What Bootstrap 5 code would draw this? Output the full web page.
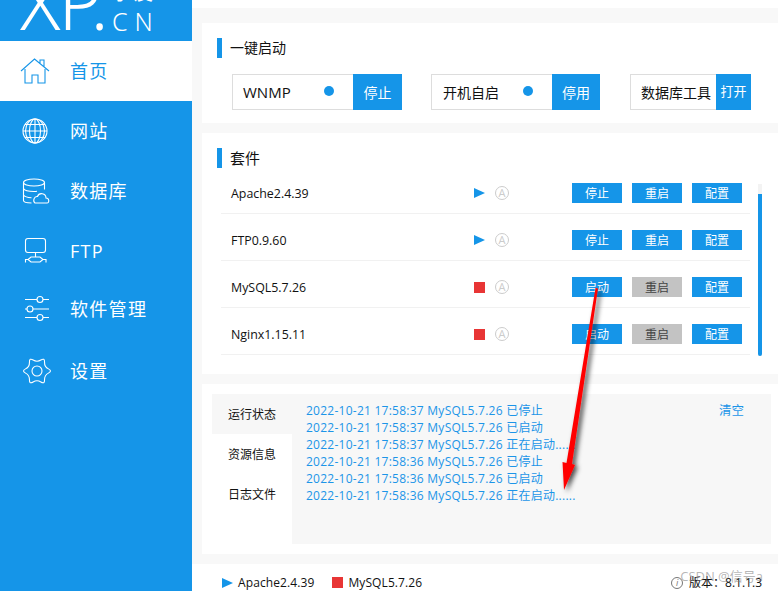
<!DOCTYPE html>
<html lang="zh-CN">
<head>
  <meta charset="UTF-8" />
  <meta name="viewport" content="width=device-width, initial-scale=1.0"/>
  <title>小皮面板</title>
  <link href="https://cdn.jsdelivr.net/npm/bootstrap@5.3.0/dist/css/bootstrap.min.css" rel="stylesheet">
  <style>
    body {
      font-family: "Open Sans", "Noto Sans CJK SC", sans-serif;
      font-size: 13px;
      color: #111;
      overflow: hidden;
    }
    .app-shell { width: 778px; height: 591px; overflow: hidden; position: relative; }
    .side-bar { width: 192px; background: #1595e8; flex-shrink: 0; }
    .logo-box { height: 41px; overflow: hidden; color: #fff; padding-left: 20px; }
    .logo-xp { font-family: "Noto Sans", sans-serif; font-weight: 300; font-size: 74px; line-height: 1; width: 92px; flex-shrink: 0; margin-top: -35px; letter-spacing: -2px; }
    .logo-cn { margin-top: -18px; line-height: 1; }
    .logo-cn .cn-top { font-size: 19px; letter-spacing: 3px; line-height: 22px; display: block; margin-bottom: 5px; }
    .logo-cn .cn-bottom { font-family: "Noto Sans", sans-serif; font-weight: 300; font-size: 25px; letter-spacing: 7px; line-height: 25px; display: block; }
    .side-link { height: 60px; padding: 0 0 0 20px; color: #fff; font-size: 18px; letter-spacing: 1.3px; }
    .side-link:hover, .side-link:focus { color: #fff; }
    .side-link.active, .side-link.active:hover { background: #fff; color: #1595e8; }
    .side-link svg { width: 30px; height: 30px; margin-right: 20px; overflow: visible; flex-shrink: 0; fill: none; stroke: currentColor; stroke-width: 1.1; }
    .side-link.lift-up { padding-bottom: 4px; }
    .main-area { background: #f8f8f8; min-width: 0; }
    .top-strip { height: 8px; background: #fff; margin-bottom: 15px; margin-left: 0; }
    .white-panel { background: #fff; margin: 0 0 10px 10px; }
    .panel-title { margin-left: 15px; padding-left: 8px; border-left: 5px solid #1595e8; height: 20px; line-height: 20px; font-size: 14px; }
    .quick-box { height: 36px; border: 1px solid #ddd; border-right: 0; padding-left: 10px; font-size: 14px; }
    .quick-box .box-text { padding-top: 1px; }
    .status-dot { width: 10px; height: 10px; border-radius: 50%; background: #1595e8; margin-bottom: 3px; }
    .flat-btn { background: #1595e8; color: #fff; border: 0; border-radius: 0; padding: 0; font-size: 13px; }
    .flat-btn:hover { background: #1595e8; color: #fff; }
    .quick-btn { height: 36px; font-size: 14px; }
    .suite-list { margin-left: 19px; width: 529px; margin-top: -1px; }
    .suite-row { height: 47px; padding: 16px 8px 10px 10px; border-bottom: 1px solid #f1f1f1; }
    .suite-name { width: 243px; line-height: 22px; font-size: 12.4px; }
    .play-mark { width: 0; height: 0; border-left: 11px solid #1595e8; border-top: 5.5px solid transparent; border-bottom: 5.5px solid transparent; }
    .stop-mark { width: 11px; height: 11px; background: #e83535; }
    .auto-mark { width: 14px; height: 14px; border: 1px solid #ccc; border-radius: 50%; color: #ccc; font-size: 11px; line-height: 12px; text-align: center; margin-left: 10px; }
    .row-gap { gap: 10px; }
    .row-btn { width: 50px; height: 20px; line-height: 19px; padding-top: 1px; font-size: 12px; }
    .row-btn.off { background: #c3c3c3; color: #444; }
    .scroll-track { width: 4px; height: 172px; margin: 16px 0 0 8px; background: #f3f3f3; padding-top: 10px; }
    .scroll-thumb { height: 162px; background: #1595e8; border-radius: 0 0 2px 2px; }
    .tab-col { width: 80px; flex-shrink: 0; }
    .tab-item { height: 40px; line-height: 42px; text-align: center; font-size: 12px; }
    .tab-item.current { background: #f7f7f7; }
    .log-box { background: #f7f7f7; height: 150px; width: 479px; padding: 8px 27px 0 14px; color: #1c95e8; font-size: 12px; line-height: 17px; letter-spacing: .25px; }
    .clear-link { font-size: 12.500px; letter-spacing: 0; }
    .bottom-bar { height: 27px; background: #fff; padding: 10px 16px 0 30px; font-size: 12px; line-height: 20px; }
    .foot-name { margin-left: 5px; letter-spacing: .1px; }
    .foot-gap { margin-right: 18px; }
    .info-mark { width: 12px; height: 12px; border: 1px solid #777; border-radius: 50%; color: #777; font-size: 9px; line-height: 10px; text-align: center; font-style: italic; margin-right: 6px; }
    .csdn-mark { position: absolute; right: 15px; top: 567px; font-size: 13px; color: rgba(120,120,120,.55); line-height: 18px; }
    .arrow-mark { position: absolute; left: 0; top: 0; width: 778px; height: 591px; pointer-events: none; }
  </style>
</head>
<body>
<div class="app-shell d-flex">

  <div class="side-bar">
    <div class="logo-box d-flex">
      <div class="logo-xp">XP.</div>
      <div class="logo-cn"><span class="cn-top">小皮</span><span class="cn-bottom">CN</span></div>
    </div>
    <nav class="nav flex-column">
      <a class="nav-link side-link active d-flex align-items-center" href="#">
        <svg viewBox="0 0 30 30"><path d="M1 15 14.500 3 29 15M5 13v14h7v-8h6v8h7V13M20 7V4h4v7"/></svg>首页
      </a>
      <a class="nav-link side-link d-flex align-items-center" href="#">
        <svg viewBox="0 0 30 30"><circle cx="15" cy="15" r="12"/><ellipse cx="15" cy="15" rx="5.500" ry="12"/><ellipse cx="15" cy="15" rx="9.500" ry="12"/><path d="M15 3v24M3 15h24M5 8.500h20M5 21.500h20"/></svg>网站
      </a>
      <a class="nav-link side-link d-flex align-items-center" href="#">
        <svg viewBox="0 0 30 30"><ellipse cx="14" cy="6.500" rx="10.500" ry="3.500"/><path d="M3.500 6.500v18c0 1.500 3 2.500 8 2.500M24.500 6.500v7M3.500 12.500c1 2 5 3 10.500 3 1 0 2 0 3-.2M3.500 19c1 1.500 4 2.500 8 2.700M15 27h12c2.500 0 2.500-5-1-5 0-5-7-6-8.500-1.500C14 20 12.500 25 15 27z"/></svg>数据库
      </a>
      <a class="nav-link side-link d-flex align-items-center" href="#">
        <svg viewBox="0 0 30 30"><rect x="5.500" y="2.500" width="20" height="14" rx="2.500"/><path d="M15.500 16.500V21M11 21h9l3 2.500-3 2.500h-9l-3-2.500zM8 23.500H5.500v3M23 23.500h3v3"/></svg>FTP
      </a>
      <a class="nav-link side-link lift-up d-flex align-items-center" href="#">
        <svg viewBox="0 0 30 30"><path d="M5 5.500h12M23 5.500h6M5 15h2M13 15h16M5 23.500h12M23 23.500h6"/><circle cx="20" cy="5.500" r="3"/><circle cx="10" cy="15" r="3"/><circle cx="20" cy="23.500" r="3"/></svg>软件管理
      </a>
      <a class="nav-link side-link d-flex align-items-center" href="#">
        <svg viewBox="0 0 30 30"><g transform="translate(17 15)"><path d="M11.430 -2.125Q15.500 0 11.430 2.125Q7.360 4.250 7.550 8.830Q7.750 13.420 3.875 10.960Q0 8.500 -3.875 10.960Q-7.750 13.420 -7.550 8.830Q-7.360 4.250 -11.430 2.125Q-15.500 0 -11.430 -2.125Q-7.360 -4.250 -7.550 -8.830Q-7.750 -13.420 -3.875 -10.960Q0 -8.500 3.875 -10.960Q7.750 -13.420 7.550 -8.830Q7.360 -4.250 11.430 -2.125Z"/><circle r="5"/></g></svg>设置
      </a>
    </nav>
  </div>

  <div class="main-area flex-grow-1">
    <div class="top-strip"></div>

    <div class="white-panel" style="height:100px;padding-top:15px">
      <div class="panel-title mb-3">一键启动</div>
      <div class="d-flex" style="padding-left:30px">
        <div class="quick-box d-flex align-items-center justify-content-between" style="width:121px;padding-right:19px;font-size:15px"><span>WNMP</span><span class="status-dot"></span></div>
        <button class="btn flat-btn quick-btn" style="width:49px">停止</button>
        <div class="quick-box d-flex align-items-center justify-content-between" style="width:121px;margin-left:29px;padding-left:11px;padding-right:19px"><span class="box-text">开机自启</span><span class="status-dot"></span></div>
        <button class="btn flat-btn quick-btn" style="width:48px">停用</button>
        <div class="quick-box d-flex align-items-center" style="width:86px;margin-left:30px"><span class="box-text">数据库工具</span></div>
        <button class="btn flat-btn quick-btn" style="width:35px;font-size:13px">打开</button>
      </div>
    </div>

    <div class="white-panel" style="height:241px;padding-top:15px">
      <div class="panel-title" style="font-size:15px">套件</div>
      <div class="d-flex">
        <div class="suite-list" id="suiteList"></div>
        <div class="scroll-track"><div class="scroll-thumb"></div></div>
      </div>
    </div>

    <div class="white-panel d-flex" style="height:170px;padding:10px 0 0 10px">
      <div class="tab-col">
        <div class="tab-item current">运行状态</div>
        <div class="tab-item">资源信息</div>
        <div class="tab-item">日志文件</div>
      </div>
      <div class="log-box d-flex justify-content-between">
        <div>
          <div>2022-10-21 17:58:37 MySQL5.7.26 已停止</div>
          <div>2022-10-21 17:58:37 MySQL5.7.26 已启动</div>
          <div>2022-10-21 17:58:37 MySQL5.7.26 正在启动......</div>
          <div>2022-10-21 17:58:36 MySQL5.7.26 已停止</div>
          <div>2022-10-21 17:58:36 MySQL5.7.26 已启动</div>
          <div>2022-10-21 17:58:36 MySQL5.7.26 正在启动......</div>
        </div>
        <div class="clear-link">清空</div>
      </div>
    </div>

    <div class="bottom-bar d-flex align-items-center">
      <span class="play-mark"></span><span class="foot-name foot-gap">Apache2.4.39</span>
      <span class="stop-mark"></span><span class="foot-name">MySQL5.7.26</span>
      <span class="info-mark ms-auto">i</span><span>版本：8.1.1.3</span>
    </div>
  </div>

  <div class="csdn-mark">CSDN @信号a</div>

  <svg class="arrow-mark" viewBox="0 0 778 591">
    <defs><filter id="arrowShadow" x="-50%" y="-10%" width="200%" height="120%"><feDropShadow dx="3" dy="2" stdDeviation="2.5" flood-color="#000" flood-opacity=".7"/></filter></defs>
    <path filter="url(#arrowShadow)" fill="#f00" d="M595.500 288 598 288.500 572 464 575 465 564 490 562.500 462 566.500 463z"/>
  </svg>
</div>

<script src="https://cdn.jsdelivr.net/npm/bootstrap@5.3.0/dist/js/bootstrap.bundle.min.js"></script>
<script>
  const suites = [
    { name: "Apache2.4.39", running: true },
    { name: "FTP0.9.60", running: true },
    { name: "MySQL5.7.26", running: false },
    { name: "Nginx1.15.11", running: false }
  ];

  document.getElementById("suiteList").innerHTML = suites.map(s => `
    <div class="suite-row d-flex">
      <div class="suite-name">${s.name}</div>
      <div class="d-flex align-items-center">
        <span class="${s.running ? "play-mark" : "stop-mark"}"></span>
        <span class="auto-mark">A</span>
      </div>
      <div class="d-flex row-gap ms-auto">
        <button class="btn flat-btn row-btn">${s.running ? "停止" : "启动"}</button>
        <button class="btn flat-btn row-btn ${s.running ? "" : "off"}">重启</button>
        <button class="btn flat-btn row-btn">配置</button>
      </div>
    </div>
  `).join("");
</script>
</body>
</html>
